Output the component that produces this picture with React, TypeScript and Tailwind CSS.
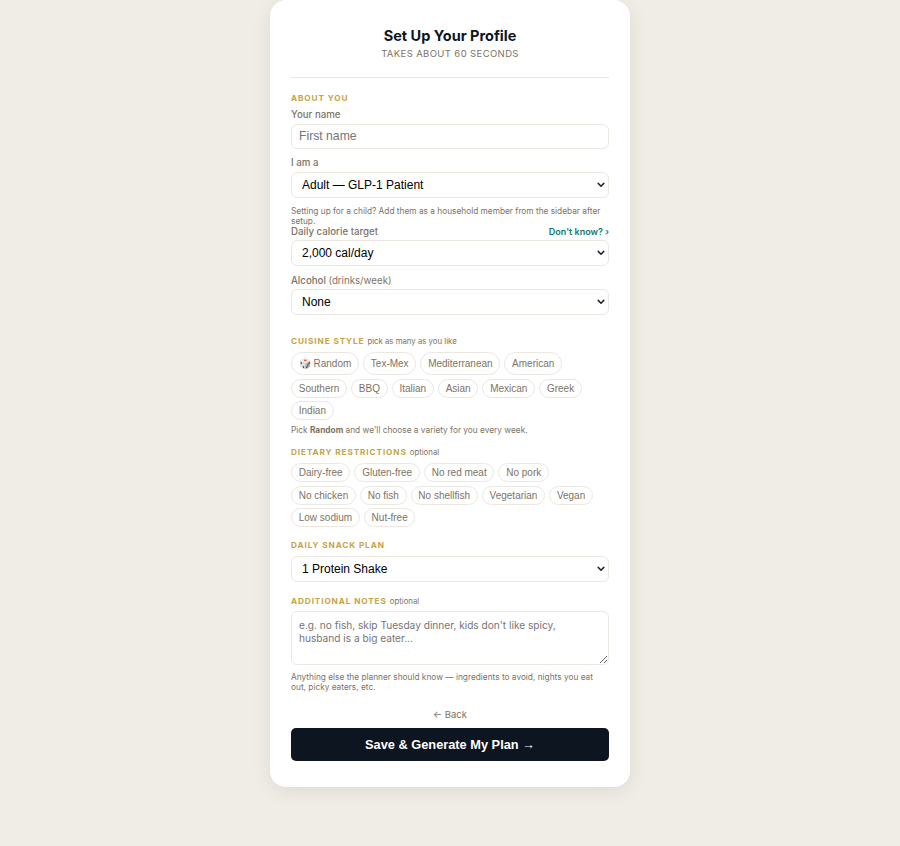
import React from "react";

const cuisines = [
  ["🎲 Random", "Tex-Mex", "Mediterranean", "American"],
  ["Southern", "BBQ", "Italian", "Asian", "Mexican", "Greek"],
  ["Indian"],
];
const dietary = [
  ["Dairy-free", "Gluten-free", "No red meat", "No pork"],
  ["No chicken", "No fish", "No shellfish", "Vegetarian", "Vegan"],
  ["Low sodium", "Nut-free"],
];

function Select({ value, className }: { value: string; className: string }) {
  return (
    <div className={`relative ${className}`}>
      <select
        defaultValue={value}
        className="block h-[26px] w-full appearance-none rounded-[6px] border border-[#ebe8e2] bg-white pl-[10px] pr-5 text-[12px] text-black [font-family:'Liberation_Sans',Arial,sans-serif]"
      >
        <option value={value}>{value}</option>
      </select>
      <svg className="pointer-events-none absolute right-[4px] top-[10px] h-[6px] w-[8px]" viewBox="0 0 8 6" fill="none">
        <path d="M1.2 1.4 4 4.2l2.8-2.8" stroke="#222" strokeWidth="1.5" strokeLinecap="round" strokeLinejoin="round" />
      </svg>
    </div>
  );
}

function Pill({ label, tall }: { label: string; tall?: boolean }) {
  return (
    <span
      className={`inline-flex items-center rounded-full border border-[#ebe8e2] bg-white px-[6.75px] text-[10px] text-[#7d7364] [font-family:'Liberation_Sans',Arial,sans-serif] ${tall ? "h-[23px]" : "h-[19px]"}`}
    >
      {label}
    </span>
  );
}

function SectionLabel({ title, note }: { title: string; note?: string }) {
  return (
    <div className="flex items-baseline gap-[3px] leading-[12px]">
      <span className="text-[8.2px] font-bold tracking-[0.11em] text-[#c4a443]">{title}</span>
      {note && <span className="text-[7.8px] text-[#7d7364]">{note}</span>}
    </div>
  );
}

export default function App() {
  return (
    <div className="min-h-[846px] bg-[#f0ede6] [font-family:Inter,sans-serif]">
      <div className="mx-auto h-[787px] w-[360px] rounded-2xl bg-white px-[21px] pt-[27px] shadow-[0_4px_20px_rgba(0,0,0,0.08)]">
        <div className="border-b border-[#e8e4dc] pb-[16px] text-center">
          <h1 className="text-[14.5px] font-bold leading-[18px] text-[#0d1520]">Set Up Your Profile</h1>
          <p className="mt-[2px] text-[9.5px] leading-[14px] tracking-[0.04em] text-[#7d7364]">TAKES ABOUT 60 SECONDS</p>
        </div>

        <div className="mt-[14px]">
          <SectionLabel title="ABOUT YOU" />
          <label className="mt-[5px] block text-[9.7px] font-medium leading-[12px] text-[#7d7364]">Your name</label>
          <input
            placeholder="First name"
            className="mt-[3px] block h-[25px] w-full rounded-[6px] border border-[#ebe8e2] bg-white px-[7px] pb-[1px] text-[12.2px] placeholder:text-[#757575] [font-family:'Liberation_Sans',Arial,sans-serif]"
          />
          <label className="mt-[8px] block text-[9.7px] font-medium leading-[12px] text-[#7d7364]">I am a</label>
          <Select value="Adult — GLP-1 Patient" className="mt-[3px]" />
          <p className="mt-[9px] text-[8.3px] leading-[9.5px] text-[#7d7364]">
            Setting up for a child? Add them as a household member from the sidebar after setup.
          </p>
          <div className="flex items-center justify-between leading-[12px]">
            <label className="text-[9.7px] font-medium text-[#7d7364]">Daily calorie target</label>
            <span className="text-[9px] font-semibold text-[#0f766e]">Don't know? ›</span>
          </div>
          <Select value="2,000 cal/day" className="mt-[2px]" />
          <label className="mt-[9px] block text-[9.7px] font-medium leading-[12px] text-[#7d7364]">
            Alcohol <span className="font-normal">(drinks/week)</span>
          </label>
          <Select value="None" className="mt-[2px]" />
        </div>

        <div className="mt-[20px]">
          <SectionLabel title="CUISINE STYLE" note="pick as many as you like" />
          <div className="mt-[5px] flex flex-col gap-[3.5px]">
            {cuisines.map((row, i) => (
              <div key={i} className="flex gap-[4px]">
                {row.map((c) => (
                  <Pill key={c} label={c} tall={i === 0} />
                ))}
              </div>
            ))}
          </div>
          <p className="mt-[5px] text-[8.3px] leading-[10px] text-[#7d7364]">
            Pick <b>Random</b> and we'll choose a variety for you every week.
          </p>
        </div>

        <div className="mt-[11px]">
          <SectionLabel title="DIETARY RESTRICTIONS" note="optional" />
          <div className="mt-[5px] flex flex-col gap-[3.5px]">
            {dietary.map((row, i) => (
              <div key={i} className="flex gap-[4px]">
                {row.map((d) => (
                  <Pill key={d} label={d} />
                ))}
              </div>
            ))}
          </div>
        </div>

        <div className="mt-[12px]">
          <SectionLabel title="DAILY SNACK PLAN" />
          <Select value="1 Protein Shake" className="mt-[5px]" />
        </div>

        <div className="mt-[13px]">
          <SectionLabel title="ADDITIONAL NOTES" note="optional" />
          <textarea
            placeholder="e.g. no fish, skip Tuesday dinner, kids don't like spicy, husband is a big eater..."
            className="mt-[4px] block h-[54px] w-full rounded-[6px] border border-[#ebe8e2] bg-white pl-[7px] pr-[30px] py-[7px] text-[10.15px] leading-[12.5px] placeholder:text-[#757575]"
          />
          <p className="mt-[8px] text-[8.3px] leading-[9.5px] text-[#7d7364]">
            Anything else the planner should know — ingredients to avoid, nights you eat out, picky eaters, etc.
          </p>
        </div>

        <p className="mt-[17px] text-center text-[9.5px] leading-[12px] text-[#7d7364]">← Back</p>
        <button className="mt-[7px] block h-[33px] w-full rounded-[5px] bg-[#0d1520] text-[12.8px] font-bold text-white [font-family:'Liberation_Sans',Arial,sans-serif]">
          Save &amp; Generate My Plan →
        </button>
      </div>
    </div>
  );
}
